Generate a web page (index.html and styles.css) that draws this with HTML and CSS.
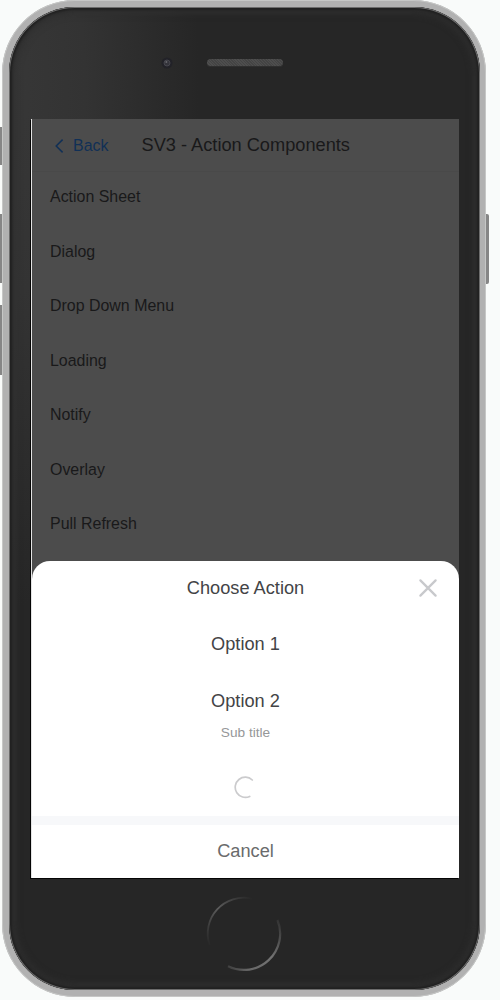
FILE: index.html
```html
<!DOCTYPE html>
<html lang="en">
<head>
<meta charset="utf-8">
<title>SV3 - Action Components</title>
<link rel="stylesheet" href="styles.css">
</head>
<body>
<div class="stage">
  <span class="key key-mute"></span>
  <span class="key key-up"></span>
  <span class="key key-down"></span>
  <span class="key key-power"></span>
  <div class="phone">
    <div class="bezel-top">
      <svg class="camera" viewBox="0 0 14 14"><circle cx="7" cy="7" r="5.5" fill="#222228"/><circle cx="7" cy="7" r="3" fill="#34343b" stroke="#46464d"/><circle cx="6.4" cy="6" r="1" fill="#66666c"/></svg>
      <span class="speaker"></span>
    </div>
    <main class="screen">
      <header class="navbar">
        <a class="back"><svg class="chevron" viewBox="0 0 10 16"><path d="M8.6 1.6 2.2 8l6.4 6.4" fill="none" stroke="currentColor" stroke-width="1.5"/></svg>Back</a>
        <h1 class="title">SV3 - Action Components</h1>
      </header>
      <ul class="list">
        <li>Action Sheet</li>
        <li>Dialog</li>
        <li>Drop Down Menu</li>
        <li>Loading</li>
        <li>Notify</li>
        <li>Overlay</li>
        <li>Pull Refresh</li>
      </ul>
      <section class="sheet">
        <div class="sheet-title">Choose Action
          <svg class="close" viewBox="0 0 20 20"><path d="M2.4 2.4 17.6 17.6M17.6 2.4 2.4 17.6" fill="none" stroke="#c8c9cc" stroke-width="2.3" stroke-linecap="round"/></svg>
        </div>
        <div class="option">Option 1</div>
        <div class="option option-two">Option 2<small class="subtitle">Sub title</small></div>
        <div class="option option-loading"><svg class="spinner" viewBox="0 0 24 24"><path d="M18.3 5A10.1 10.1 0 1 0 15.7 21.4" fill="none" stroke="#cbcbcd" stroke-width="1.7" stroke-linecap="round"/></svg></div>
        <div class="gap"></div>
        <div class="cancel">Cancel</div>
      </section>
    </main>
    <div class="bezel-bottom">
      <svg class="home" viewBox="0 0 78 78">
        <defs>
          <linearGradient id="upper" x1="0" y1="1" x2="1" y2="0"><stop offset="0" stop-color="#262626"/><stop offset=".5" stop-color="#5c5c5c"/><stop offset="1" stop-color="#262626"/></linearGradient>
          <linearGradient id="lower" x1="1" y1="0" x2="0" y2="1"><stop offset="0" stop-color="#303030"/><stop offset=".45" stop-color="#727272"/><stop offset=".8" stop-color="#686868"/><stop offset="1" stop-color="#383838"/></linearGradient>
        </defs>
        <path d="M4.5 50A36 36 0 0 1 47 3.7" fill="none" stroke="url(#upper)" stroke-width="1.8"/>
        <path d="M72.5 25A36.3 36.3 0 0 1 23 71.3" fill="none" stroke="url(#lower)" stroke-width="2.2"/>
      </svg>
    </div>
  </div>
</div>
</body>
</html>
```
FILE: styles.css
```css
* { box-sizing: border-box; }
body {
  margin: 0;
  background: #f9fbfa;
  font-family: "Liberation Sans", Arial, sans-serif;
  overflow: hidden;
}
.stage {
  position: relative;
  width: 500px;
  height: 1000px;
  padding: 0 14px 3px 2px;
}
.key { position: absolute; background: #868686; }
.key-mute { left: 0; top: 127px; width: 3px; height: 38px; }
.key-up { left: 0; top: 214px; width: 3px; height: 69px; }
.key-down { left: 0; top: 305px; width: 3px; height: 70px; }
.key-power { left: 484px; top: 214px; width: 5px; height: 70px; border-radius: 0 2px 2px 0; }
.phone {
  position: relative;
  display: flex;
  flex-direction: column;
  height: 997px;
  border: solid #b1b1b1;
  border-width: 7px 6px 7px 7px;
  border-radius: 73px;
  background: radial-gradient(ellipse 190px 520px at 0 80px, #373737 0, #333 40%, #262626 100%) #262626;
}
.phone::before {
  content: "";
  position: absolute;
  inset: 0;
  border-radius: 66px;
  box-shadow: inset 0 0 0 1px #6c6c6c, inset 0 0 2px 3px #212121, inset 0 0 7px 6px #2f2f2f;
}
.phone::after {
  content: "";
  position: absolute;
  inset: -7px -6px -7px -7px;
  border-radius: 73px;
  border: 1px solid #c6c7c6;
}
.bezel-top {
  display: flex;
  height: 112px;
  padding: 49px 0 0 151px;
  gap: 33px;
}
.camera { width: 14px; height: 14px; }
.speaker {
  width: 76px;
  height: 7px;
  margin-top: 3px;
  border-radius: 4px;
  background: repeating-linear-gradient(45deg, #4e4e4e 0 1px, #444 1px 2px);
  box-shadow: 0 1px 1px #303030;
}
.screen {
  position: relative;
  z-index: 1;
  width: 428px;
  height: 759px;
  margin-left: 22px;
  border-left: 1px solid #e4e4e4;
  background: #4c4c4c;
  box-shadow: -1px 1px 0 #050505;
  color: #19191a;
}
.navbar {
  display: flex;
  align-items: center;
  height: 53px;
  padding: 1px 0 0 22px;
  border-bottom: 1px solid #494949;
}
.back {
  display: flex;
  align-items: center;
  width: 87.5px;
  gap: 9px;
  color: #113056;
  font-size: 15.94px;
}
.chevron { width: 10px; height: 16px; }
.title { margin: 0; font-size: 18.22px; font-weight: 400; white-space: nowrap; }
.list { margin: -2px 0 0; padding: 0; list-style: none; }
.list li {
  height: 54.55px;
  padding-left: 18px;
  font-size: 15.94px;
  line-height: 54.55px;
}
.sheet {
  position: absolute;
  inset: auto 0 0 0;
  height: 317px;
  border-radius: 18px 18px 0 0;
  background: #fff;
  color: #434446;
  font-size: 18.22px;
  text-align: center;
}
.sheet-title { position: relative; height: 55px; line-height: 55px; }
.close { position: absolute; top: 17px; right: 21px; width: 20px; height: 20px; }
.option { height: 57px; line-height: 57px; }
.option-two { height: 85px; }
.subtitle {
  display: block;
  margin-top: -7px;
  color: #969799;
  font-size: 13.67px;
  line-height: 20px;
}
.option-loading {
  display: flex;
  align-items: center;
  justify-content: center;
  height: 58px;
}
.spinner { width: 24px; height: 24px; }
.gap { height: 9px; background: #f7f8fa; }
.cancel { height: 53px; color: #6a6b6c; line-height: 53px; }
.bezel-bottom { padding: 17px 0 0 196px; }
.home { display: block; width: 78px; height: 78px; }
```
